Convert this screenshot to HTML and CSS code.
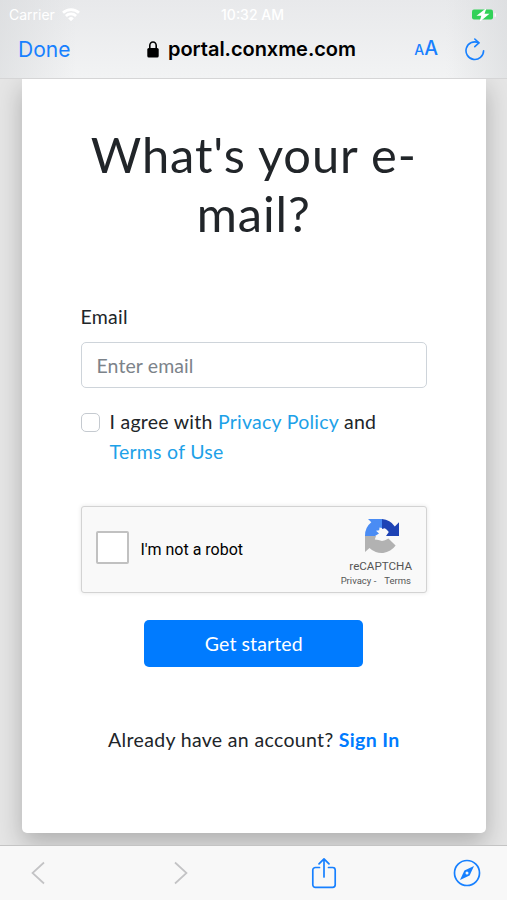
FILE: index.html
```html
<!DOCTYPE html>
<html lang="en">
<head>
    <meta charset="UTF-8">
    <meta name="viewport" content="width=device-width, initial-scale=1.0">
    <title>What's your e-mail?</title>
    <link rel="stylesheet" href="styles.css">
</head>
<body>
    <header class="browser-top">
        <div class="status-bar">
            <div class="carrier">
                <span>Carrier</span>
                <svg width="18" height="14" viewBox="0 0 18 14" fill="none" stroke="#fff" stroke-width="2.7">
                    <path d="M1 4.8a11.5 11.5 0 0 1 16 0M3.9 8a7.3 7.3 0 0 1 10.2 0"/>
                    <path d="M9 13.2L6.2 10.4a4 4 0 0 1 5.6 0z" fill="#fff" stroke="none"/>
                </svg>
            </div>
            <span class="time">10:32 AM</span>
            <svg class="battery" width="24" height="12" viewBox="0 0 24 12">
                <rect x="0" y="0.5" width="21" height="10" rx="2" fill="#32d158"/>
                <path d="M14.5 -1L4.500 6.700h4.800L7.500 13l10-8.200h-5z" fill="#fff"/>
                <path d="M22.6 4v4a2 2 0 0 0 0-4z" fill="#fff"/>
            </svg>
        </div>
        <nav class="address-bar">
            <a class="done" href="#">Done</a>
            <div class="address">
                <svg width="12" height="17" viewBox="0 0 12 17">
                    <path d="M2.8 8V4.5a3.2 3.5 0 0 1 6.4 0V8" fill="none" stroke="#000" stroke-width="1.6"/>
                    <rect x="0.3" y="7" width="11.4" height="9.6" rx="1.5"/>
                </svg>
                <span>portal.conxme.com</span>
            </div>
            <div class="tools">
                <span class="text-size"><small>A</small>A</span>
                <svg width="20" height="23" viewBox="0 0 20 23" fill="none" stroke="#1780ff" stroke-width="1.6" stroke-linecap="round" stroke-linejoin="round">
                    <path d="M18.6 12.8A8.8 8.8 0 1 1 13.7 4.8"/>
                    <path d="M9.8 1L13.9 4.9L9.8 8.6"/>
                </svg>
            </div>
        </nav>
    </header>

    <main class="page">
        <form class="card">
            <h1>What's your e-mail?</h1>
            <label class="email-label" for="email">Email</label>
            <input class="email" id="email" type="email" placeholder="Enter email">
            <div class="agree">
                <input class="check" id="agree" type="checkbox">
                <label for="agree"><span class="agree-line">I agree with <a href="#">Privacy Policy</a> and</span> <a class="terms" href="#">Terms of Use</a></label>
            </div>
            <div class="captcha">
                <input class="captcha-check" id="robot" type="checkbox">
                <label for="robot">I'm not a robot</label>
                <div class="captcha-brand">
                    <svg width="36" height="36" viewBox="0 0 36 36">
                        <path d="M18 1H4l3.3 3.3A17 17 0 0 0 1 18h10l4-2.5-3-2.8 3.2-.5.3-2.700L18 10z" fill="#4a8cf4"/>
                        <path d="M18 1a17 17 0 0 1 12.8 7.4L35 4.2V18H22l2.800-4-2-2.200-2-1.600L18 11z" fill="#1e43b5"/>
                        <path d="M1 18h11l-1.200 3.500 3.600.500 3.600 1 3-.800 3.400-1.700 7.200 7A17 17 0 0 1 5.500 30L1 34z" fill="#b2b2b2"/>
                    </svg>
                    <span class="captcha-name">reCAPTCHA</span>
                    <span class="captcha-links"><span>Privacy -</span><span>Terms</span></span>
                </div>
            </div>
            <button class="submit" type="button">Get started</button>
            <p class="signin"><span>Already have an account?</span> <a href="#">Sign In</a></p>
        </form>
    </main>

    <footer class="browser-bottom">
        <svg width="14" height="24" viewBox="0 0 14 24" fill="none" stroke="#c3c3c5" stroke-width="1.7">
            <path d="M13 1.5L1.5 12L13 22.5"/>
        </svg>
        <svg class="forward" width="14" height="24" viewBox="0 0 14 24" fill="none" stroke="#c3c3c5" stroke-width="1.7">
            <path d="M1 1.5L12.5 12L1 22.5"/>
        </svg>
        <svg class="share" width="26" height="32" viewBox="0 0 26 32" fill="none" stroke="#1780ff" stroke-width="1.7" stroke-linecap="round" stroke-linejoin="round">
            <path d="M8.5 10.5H4.4a2.6 2.6 0 0 0-2.6 2.6v14.6a2.6 2.6 0 0 0 2.6 2.6h17.2a2.6 2.6 0 0 0 2.6-2.6V13.1a2.6 2.6 0 0 0-2.6-2.6h-4.1M13 20V2M8 6.8L13 1.8l5 5"/>
        </svg>
        <svg class="compass" width="28" height="28" viewBox="0 0 28 28">
            <circle cx="14" cy="14" r="12.5" fill="none" stroke="#1780ff" stroke-width="1.7"/>
            <path d="M21 7L16.6 16.6L7 21L11.4 11.4z" fill="#1780ff"/>
            <circle cx="14" cy="14" r="1.5" fill="#f8f8f8"/>
        </svg>
    </footer>
</body>
</html>
```

FILE: styles.css
```css
* {
    box-sizing: border-box;
}

body {
    margin: 0;
    height: 100vh;
    display: flex;
    flex-direction: column;
    overflow: hidden;
    font-family: Lato, sans-serif;
    font-size: 19.5px;
    line-height: 29.3px;
    color: #212529;
    background-color: #e5e5e5;
}

a {
    color: #1da1e8;
    text-decoration: none;
}

svg {
    display: block;
    flex-shrink: 0;
}

.browser-top {
    height: 79px;
    flex-shrink: 0;
    z-index: 1;
    border-bottom: 1px solid #d5d5d6;
    background: linear-gradient(to right, rgba(215, 217, 219, 0.6), transparent 15%, transparent 88%, rgba(215, 217, 219, 0.6)), linear-gradient(#e8e9eb, #f2f3f4);
    font-family: Inter, sans-serif;
}

.status-bar {
    display: grid;
    grid-template-columns: 1fr auto 1fr;
    align-items: center;
    height: 27px;
    padding: 0 11px 0 9px;
    font-size: 14px;
    color: #fff;
}

.carrier {
    display: flex;
    align-items: center;
    gap: 7px;
}

.time {
    font-weight: 500;
}

.battery {
    justify-self: end;
}

.address-bar {
    display: grid;
    grid-template-columns: 1fr auto 1fr;
    align-items: center;
    height: 45px;
    padding: 0 22px 0 18px;
}

.done {
    color: #1780ff;
    font-size: 21px;
}

.address {
    display: flex;
    align-items: center;
    gap: 9px;
    font-size: 20px;
    font-weight: 600;
    letter-spacing: -0.05px;
    color: #000;
}

.tools {
    display: flex;
    justify-content: flex-end;
    align-items: center;
    gap: 27px;
}

.text-size {
    color: #1780ff;
    font-size: 19.5px;
    font-weight: 500;
}

.text-size small {
    font-size: 14px;
}

.page {
    flex: 1;
    padding: 0 21px 12px 22px;
}

.card {
    display: flex;
    flex-direction: column;
    height: 754px;
    padding: 46px 59px 0 58.5px;
    background-color: #fff;
    border-radius: 0 0 5px 5px;
    box-shadow: 0 10px 24px rgba(0, 0, 0, 0.24);
}

h1 {
    margin: 0 0 60px;
    font-size: 48.8px;
    line-height: 58.6px;
    font-weight: 400;
    letter-spacing: 0.9px;
    text-align: center;
}

.email-label {
    margin-bottom: 11px;
    letter-spacing: 0.25px;
}

.email {
    width: 100%;
    height: 46px;
    padding: 0 15px;
    border: 1px solid #ced4da;
    border-radius: 5px;
    font: inherit;
    letter-spacing: 0.1px;
    outline: none;
}

.email::placeholder {
    color: #7c838a;
    opacity: 1;
}

.agree {
    display: flex;
    gap: 10px;
    margin-top: 19px;
    letter-spacing: 0.26px;
}

.check {
    appearance: none;
    flex-shrink: 0;
    width: 19px;
    height: 19px;
    margin: 6px 0 0;
    border: 1px solid #c5cad0;
    border-radius: 5px;
}

.agree-line {
    display: block;
    white-space: nowrap;
}

.captcha {
    display: flex;
    align-items: center;
    height: 87px;
    margin-top: 40px;
    padding: 0 14px;
    border: 1px solid #d3d3d3;
    border-radius: 3px;
    background-color: #f9f9f9;
    box-shadow: 0 0 4px rgba(0, 0, 0, 0.1);
    font-family: Roboto, sans-serif;
    font-size: 16px;
    color: #000;
}

.captcha-check {
    appearance: none;
    width: 33px;
    height: 33px;
    margin: -4px 12px 0 0;
    border: 2px solid #c1c1c1;
    border-radius: 2px;
    background-color: #fff;
}

.captcha-brand {
    display: flex;
    flex-direction: column;
    align-items: flex-end;
    margin-left: auto;
    color: #555;
}

.captcha-brand svg {
    margin: 6px 12px 0 0;
}

.captcha-name {
    margin-top: 5px;
    font-size: 11.6px;
    line-height: 14px;
}

.captcha-links {
    display: flex;
    gap: 8px;
    margin: 2px 1px 0 0;
    font-size: 9.5px;
    line-height: 12px;
}

.submit {
    align-self: center;
    width: 219px;
    height: 47px;
    margin-top: 27px;
    border: none;
    border-radius: 5px;
    background-color: #007bff;
    color: #fff;
    font: inherit;
    letter-spacing: 0.1px;
}

.signin {
    margin: 58px 0 0;
    letter-spacing: 0.34px;
    text-align: center;
    white-space: nowrap;
}

.signin a {
    color: #007bff;
    font-weight: 700;
}

.browser-bottom {
    display: flex;
    align-items: center;
    height: 55px;
    flex-shrink: 0;
    z-index: 1;
    padding: 0 26px 0 31px;
    border-top: 1px solid #c4c4c4;
    background-color: #f8f8f8;
}

.forward {
    margin-left: 129px;
}

.share {
    margin-left: 123px;
}

.compass {
    margin-left: auto;
}
```
